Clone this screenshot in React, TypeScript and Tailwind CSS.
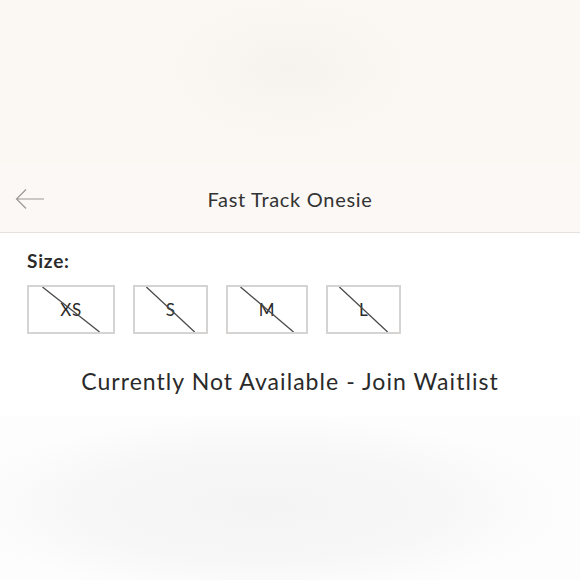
import React from "react";

const sizes = [
  { label: "XS", w: "w-[88px]" },
  { label: "S", w: "w-[75px]" },
  { label: "M", w: "w-[82px]" },
  { label: "L", w: "w-[75px]" },
];

function SizeBox({ label, w }: { label: string; w: string }) {
  return (
    <div
      className={`relative ${w} h-[49px] border-2 border-[#d6d4d2] bg-white flex items-center justify-center`}
    >
      <span className="text-[17px] text-[#2a2a2a] leading-none tracking-[0.5px]" style={{ fontFamily: "Lato, sans-serif" }}>
        {label}
      </span>
      <svg className="absolute inset-0 w-full h-full" preserveAspectRatio="none" viewBox="0 0 100 100">
        <line
          x1="16"
          y1="0"
          x2="84"
          y2="100"
          stroke="#4a4a4a"
          strokeWidth="1.3"
          vectorEffect="non-scaling-stroke"
        />
      </svg>
    </div>
  );
}

export default function App() {
  return (
    <div className="w-[580px] h-[580px] bg-white flex flex-col overflow-hidden" style={{ fontFamily: "Lato, sans-serif" }}>
      <div className="h-[165px] bg-[radial-gradient(ellipse_120px_70px_at_50%_42%,#f6f2ee,#f9f5f1_60%,#fbf8f4)]" />
      <div className="h-[68px] bg-[#fbf8f5] border-b border-[#e6e1dd] relative flex items-center justify-center">
        <svg className="absolute left-[15px] top-[22px]" width="30" height="24" viewBox="0 0 30 24">
          <path d="M29 12H1.5M11 2.5L1.5 12L11 21.5" fill="none" stroke="#9b9896" strokeWidth="1.2" />
        </svg>
        <span className="text-[20px] text-[#333] tracking-[0.7px] mt-[1px]" style={{ fontFamily: "Lato, sans-serif", fontWeight: 400 }}>
          Fast Track Onesie
        </span>
      </div>
      <div className="px-[27px] pt-[16px]">
        <div className="text-[19px] font-bold text-[#2b2b2b] leading-[24px] tracking-[0.8px]">Size:</div>
        <div className="flex gap-[18px] mt-[12px]">
          {sizes.map((s) => (
            <SizeBox key={s.label} label={s.label} w={s.w} />
          ))}
        </div>
      </div>
      <div className="text-center text-[23px] text-[#2a2a2a] mt-[32px] leading-[30px] tracking-[1.05px]">
        Currently Not Available - Join Waitlist
      </div>
      <div className="flex-1 mt-[20px] bg-[radial-gradient(ellipse_300px_90px_at_45%_55%,#f5f4f4,#f8f7f7_60%,#fdfdfd)]" />
    </div>
  );
}
